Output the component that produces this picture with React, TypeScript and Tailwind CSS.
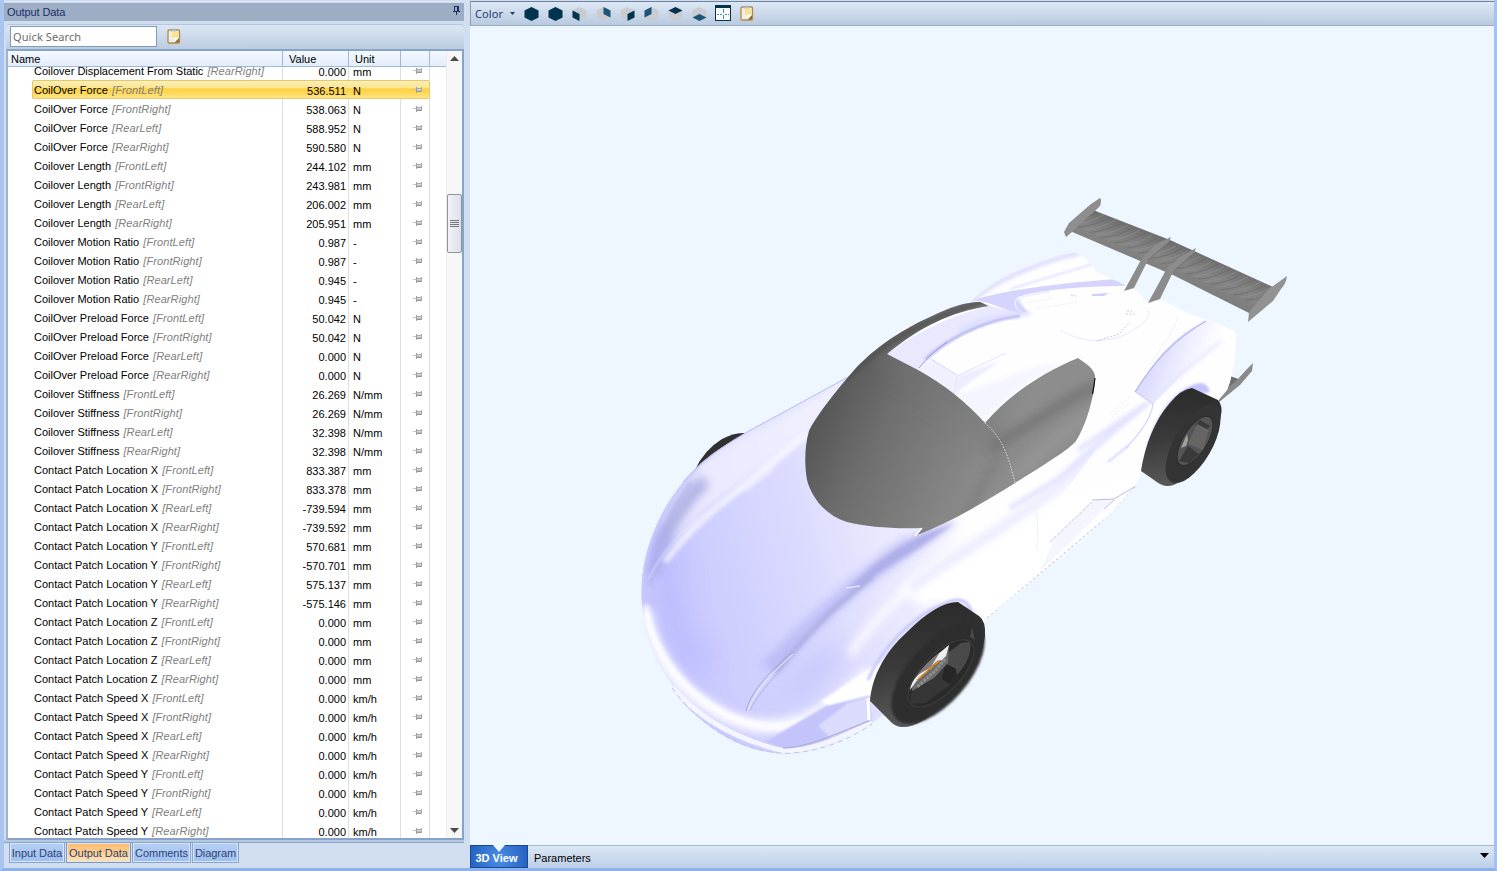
import React from "react";

type Row = [name: string, corner: string, value: string, unit: string];

const corners = ["FrontLeft", "FrontRight", "RearLeft", "RearRight"];
const group = (name: string, unit: string, values: string[]): Row[] =>
  values.map((v, i) => [name, corners[i], v, unit]);

const rows: Row[] = [
  ["Coilover Displacement From Static", "RearRight", "0.000", "mm"],
  ...group("CoilOver Force", "N", ["536.511", "538.063", "588.952", "590.580"]),
  ...group("Coilover Length", "mm", ["244.102", "243.981", "206.002", "205.951"]),
  ...group("Coilover Motion Ratio", "-", ["0.987", "0.987", "0.945", "0.945"]),
  ...group("CoilOver Preload Force", "N", ["50.042", "50.042", "0.000", "0.000"]),
  ...group("Coilover Stiffness", "N/mm", ["26.269", "26.269", "32.398", "32.398"]),
  ...group("Contact Patch Location X", "mm", ["833.387", "833.378", "-739.594", "-739.592"]),
  ...group("Contact Patch Location Y", "mm", ["570.681", "-570.701", "575.137", "-575.146"]),
  ...group("Contact Patch Location Z", "mm", ["0.000", "0.000", "0.000", "0.000"]),
  ...group("Contact Patch Speed X", "km/h", ["0.000", "0.000", "0.000", "0.000"]),
  ...group("Contact Patch Speed Y", "km/h", ["0.000", "0.000", "0.000", "0.000"]),
];

function RowPin() {
  return (
    <svg className="h-[6px] w-[10px]" viewBox="0 0 10 6" shapeRendering="crispEdges">
      <path d="M0 2h3v1H0z" fill="#c2c2c2" />
      <path d="M3 0h1v6H3z" fill="#a0a0a0" />
      <path d="M4 1h4v1H4zM8 0h1v5H8z" fill="#a9a9a9" />
      <path d="M4 2h4v1H4z" fill="#dadada" />
      <path d="M4 3h4v1H4z" fill="#bdbdbd" />
      <path d="M4 4h4v1H4z" fill="#969696" />
    </svg>
  );
}

function TitlePin() {
  return (
    <svg className="h-[9px] w-[7px]" viewBox="0 0 7 9" shapeRendering="crispEdges">
      <path d="M1 0h5v5h1v1H4v3H3V6H0V5h1zM2 1v4h2V1z" fill="#1f2f66" fillRule="evenodd" />
    </svg>
  );
}

function Clipboard() {
  return (
    <svg className="h-[16px] w-[14px]" viewBox="0 0 14 16">
      <rect x="1" y="2" width="11.500" height="13" rx="1" fill="#f0eee8" stroke="#b48a48" strokeWidth="1.300" />
      <path d="M5 4h6v5.500H5z" fill="#fbe48a" />
      <path d="M7.500 14.500 12 10v4.500z" fill="#8f6c34" />
      <path d="M7.500 14V10h4z" fill="#fff" />
      <path d="M3.500 3.600V2H5.500V.6h2V2h2v1.600z" fill="#b4bac2" />
    </svg>
  );
}

type Face = "all" | "left" | "backRight" | "right" | "backLeft" | "top" | "bottom";
const facePaths: Record<Face, string> = {
  all: "M7.5 0 14.5 3.5V10.5L7.5 14 .5 10.5V3.5z",
  left: "M.5 3.5 7.5 7V14L.5 10.5z",
  backRight: "M7.5 0 14.5 3.5V10.5L7.5 7z",
  right: "M7.5 7 14.5 3.5V10.5L7.5 14z",
  backLeft: "M7.5 0 .5 3.5V10.5L7.5 7z",
  top: "M7.5 0 14.5 3.5 7.5 7 .5 3.5z",
  bottom: "M7.5 7 14.5 10.5 7.5 14 .5 10.5z",
};

function Cube({ face }: { face: Face }) {
  const behind = face === "backRight" || face === "backLeft" || face === "bottom";
  return (
    <svg className="h-[14px] w-[15px]" viewBox="0 0 15 14">
      <path d={facePaths.all} fill="#c8cbd0" />
      <path d={facePaths[face]} fill={behind ? "#1b5578" : "#00344f"} />
    </svg>
  );
}

function FitIcon() {
  return (
    <svg className="h-[16px] w-[16px]" viewBox="0 0 16 16" shapeRendering="crispEdges">
      <path d="M0 0h16v16H0z" fill="#00344f" />
      <path d="M1 3h14v12H1z" fill="#fff" />
      <path d="M8 4h1v4H8zM8 10h1v4H8zM2 9h2v1H2zM5 9h2v1H5zM10 9h2v1h-2zM13 9h1v1h-1z" fill="#2a8fc4" />
    </svg>
  );
}

const bodyPath =
  "M970 302C985 288 1003 275 1030 265C1045 259 1060 254 1070 252.500C1077 252 1082 256 1094 266L1095 271L1136 290L1148 303L1162 300L1190 314L1208 320L1232 330Q1237 333 1236 342C1236 355 1233 375 1227 390L1215 404L1142 468L1136 486L1118 506L1082 541L1040 575L1000 607L985 622L960 660L872 723C850 737 825 748 803 752C775 757 745 750 718 732C700 720 683 705 676 694L671 682C655 662 644 632 642 605C640 575 645 550 658 522C668 500 682 482 698 466C715 450 732 441 760 425L850 376L900 330z";
const glassPath =
  "M887 354L918 370C945 385 966 402 985 423C1010 394 1042 373 1078 358L1085 363Q1094 369 1095 376C1095 395 1086 425 1076 441C1070 449 1042 466 1015 483C985 502 947 524 917 535L922 528C892 529 868 527 847 522C825 515 812 498 807 480C804 462 805 445 809 431C815 418 835 392 850 375C868 353 898 331 930 317C950 307 966 302 980 302L989 306C950 312 920 327 887 354z";

function CarModel() {
  return (
    <svg className="block h-[819px] w-[1024px]" viewBox="470 26 1024 819">
      <defs>
        <linearGradient id="body" gradientUnits="userSpaceOnUse" x1="665" y1="580" x2="960" y2="500">
          <stop offset="0" stopColor="#c8c8ff" />
          <stop offset="0.45" stopColor="#dadaff" />
          <stop offset="0.85" stopColor="#f0f0ff" />
          <stop offset="1" stopColor="#fefeff" />
        </linearGradient>
        <linearGradient id="glass" gradientUnits="userSpaceOnUse" x1="806" y1="430" x2="975" y2="510">
          <stop offset="0" stopColor="#555" />
          <stop offset="0.35" stopColor="#6e6e6e" />
          <stop offset="1" stopColor="#8d8d8d" />
        </linearGradient>
        <linearGradient id="wing" gradientUnits="userSpaceOnUse" x1="1170" y1="240" x2="1157" y2="272">
          <stop offset="0" stopColor="#6d6d6d" />
          <stop offset="0.55" stopColor="#858585" />
          <stop offset="1" stopColor="#7d7d7d" />
        </linearGradient>
        <linearGradient id="tread" x1="0.4" y1="0" x2="0.5" y2="1">
          <stop offset="0" stopColor="#2a2a2a" />
          <stop offset="0.5" stopColor="#3a3a3a" />
          <stop offset="1" stopColor="#5a5a5a" />
        </linearGradient>
        <linearGradient id="fender" gradientUnits="userSpaceOnUse" x1="1155" y1="360" x2="1205" y2="380">
          <stop offset="0" stopColor="#dcdcff" />
          <stop offset="0.6" stopColor="#f3f3ff" />
          <stop offset="1" stopColor="#fff" />
        </linearGradient>
        <filter id="b1" x="-30%" y="-30%" width="160%" height="160%"><feGaussianBlur stdDeviation="1" /></filter>
        <filter id="b2" x="-30%" y="-30%" width="160%" height="160%"><feGaussianBlur stdDeviation="2" /></filter>
        <filter id="b5" x="-50%" y="-50%" width="200%" height="200%"><feGaussianBlur stdDeviation="5" /></filter>
        <filter id="b12" x="-100%" y="-100%" width="300%" height="300%"><feGaussianBlur stdDeviation="12" /></filter>
        <clipPath id="bodyClip"><path d={bodyPath} /></clipPath>
        <clipPath id="glassClip"><path d={glassPath} /></clipPath>
        <clipPath id="wingClip"><path d="M1093 210L1170 240L1273 287L1249 313L1173 275L1070 231z" /></clipPath>
      </defs>

      {/* far front tyre */}
      <path d="M695 470Q704 450 722 439Q735 432 745 433L725 449z" fill="#303030" />

      {/* rear diffuser fin */}
      <path d="M1227 375L1238 379L1246 370L1253 363L1252 371L1240 385L1218 403z" fill="#8a8a8a" />
      <path d="M1227 375L1238 379L1221 394z" fill="#707070" />

      <path d={bodyPath} fill="url(#body)" />
      <g clipPath="url(#bodyClip)" fill="none">
        {/* hood and nose shading */}
        <path d="M700 463C740 430 780 420 850 376L808 436L765 468L712 505L672 545L664 520z" fill="#f3f3ff" opacity="0.75" filter="url(#b5)" />
        <path d="M655 575C658 545 676 512 705 480" stroke="#a6a6e0" strokeWidth="13" opacity="0.85" filter="url(#b5)" />
        <path d="M650 585C652 555 665 520 692 482" stroke="#aaaae6" strokeWidth="5" opacity="0.6" filter="url(#b2)" />
        <path d="M672 545C660 590 672 640 705 668" stroke="#b9b9ff" strokeWidth="28" opacity="0.7" filter="url(#b12)" />
        <path d="M665 562C690 528 715 508 750 482L808 433" stroke="#fafaff" strokeWidth="6" opacity="0.75" filter="url(#b2)" />
        <path d="M648 580C660 555 680 532 700 518" stroke="#e6e6ff" strokeWidth="1.500" opacity="0.7" filter="url(#b1)" />
        <path d="M735 492L800 438M745 491L775 467" stroke="#f4f4ff" strokeWidth="3" opacity="0.7" filter="url(#b2)" />
        <path d="M645 610C648 640 665 672 693 696C728 722 758 734 797 722C822 714 845 697 870 672" stroke="#fff" strokeWidth="13" opacity="0.95" filter="url(#b5)" />
        <path d="M646 605C647 630 665 667 694 692C722 716 745 726 780 727C815 722 833 708 855 690" stroke="#fff" strokeWidth="5" opacity="0.9" filter="url(#b2)" />
        <ellipse cx="815" cy="672" rx="42" ry="10" transform="rotate(-44 815 672)" fill="#babafa" opacity="0.6" filter="url(#b12)" />
        <path d="M760 665L800 625L850 580L900 540L960 520L862 589L812 632L775 674z" fill="#b2b2f2" opacity="0.7" filter="url(#b5)" />
        <path d="M775 672C792 653 813 629 835 608L872 577" stroke="#9e9ed8" strokeWidth="4" opacity="0.75" filter="url(#b2)" />
        <path d="M746 711C752 689 771 670 793 652" stroke="#a7a7dc" strokeWidth="1" />
        <path d="M748 710C756 689 774 671 793 654" stroke="#f3f3ff" strokeWidth="1" />
        <path d="M750 710C758 694 773 678 788 662" stroke="#b4b4e4" strokeWidth="1" />
        <path d="M848 588C861 578 875 563 889 554L920 536L955 522C929 544 884 568 860 586z" fill="#aaaae6" opacity="0.85" filter="url(#b2)" />
        <path d="M846 588L860 586" stroke="#f5f5ff" strokeWidth="1" />
        <path d="M900 590C930 560 985 540 1020 520L1100 470L1140 465V600L990 625L965 600L920 605z" fill="#fff" filter="url(#b5)" />
        <path d="M850 655C885 600 945 555 1008 523" stroke="#fff" strokeWidth="7" filter="url(#b5)" />
        <path d="M910 590C945 559 990 540 1058 487L1140 410" stroke="#dedeff" strokeWidth="6" filter="url(#b5)" />
        <path d="M827 705L868 694L872 721L820 745L782 749L765 742z" fill="#c4c4fb" filter="url(#b1)" />
        <path d="M820 702L880 662L890 680L872 695L828 705z" fill="#fff" filter="url(#b1)" />
        <path d="M848 703L868 697L870 720L830 737L818 726z" fill="#e2e2ff" opacity="0.8" filter="url(#b1)" />
        <path d="M868 698L869 720" stroke="#fff" strokeWidth="3" />
        <path d="M672 687C704 724 745 742 785 751C820 750 845 734 872 723" stroke="#f5f5ff" strokeWidth="5" />
        <path d="M783 748C805 748 833 735 869 721" stroke="#a9a9d4" strokeWidth="1" />
        <path d="M642 605C640 575 645 550 658 522C668 500 682 482 698 466" stroke="#cacaff" strokeWidth="3" filter="url(#b1)" />

        {/* rear deck */}
        <path d="M970 303L1035 262L1072 251L1096 270L1150 303L1208 320L1237 332L1230 390L1140 472L1060 500L1095 450L1095 370L1078 357L985 422L887 354L930 327z" fill="#fefeff" />
        <path d="M970 302C1000 276 1050 259 1080 253" stroke="#c9c9fb" strokeWidth="3" filter="url(#b2)" />
        <path d="M1010 289L1093 264" stroke="#dcdcff" strokeWidth="1.500" filter="url(#b1)" />
        <path d="M973 300C1005 290 1060 283 1117 279L1126 286C1075 286 1035 291 1018 297L1028 313L1019 314L988 303z" fill="#d4d4ff" />
        <path d="M1018 297C1010 306 1022 316 1028 312L1018 300Q1018 296 1050 292" stroke="#ededff" strokeWidth="1.500" />
        <path d="M1028 303L1052 298M1036 309L1077 302" stroke="#ececff" strokeWidth="1" strokeDasharray="2 1" />
        <path d="M887 354C920 330 950 316 990 306L1024 314C980 322 942 345 918 370z" fill="#e8e8ff" />
        <path d="M960 330Q995 313 1030 314" stroke="#d8d8ff" strokeWidth="4" opacity="0.8" filter="url(#b2)" />
        <path d="M925 359C944 342 976 322 1020 316" stroke="#aaaaeb" strokeWidth="2" filter="url(#b1)" />
        <path d="M919 368C928 357 936 350 947 342" stroke="#9d9ddd" strokeWidth="1" />
        <path d="M918 370L931 359L957 376L954 394z" fill="#f0f0ff" />
        <path d="M957 376L1000 361L954 394z" fill="#ededff" filter="url(#b1)" />
        <path d="M931 359L957 375" stroke="#d4d4fa" strokeWidth="1" />
        <path d="M957 376L1006 353M957 376L954 395" stroke="#e2e2ff" strokeWidth="1" />
        <path d="M954 395L985 423C1000 403 1030 378 1065 362L1040 366z" fill="#f3f3ff" opacity="0.8" filter="url(#b2)" />
        <path d="M1093 294L1109 293L1104 296H1091z" fill="#ceceff" />
        <path d="M1060 330C1080 341 1100 344 1122 336Q1152 322 1148 311" stroke="#e8e8ff" strokeWidth="1" />
        <path d="M1097 341L1119 334L1130 322M1127 311h5M1126 314h8M1071 295l5 1" stroke="#c6c6f4" strokeWidth="1" strokeDasharray="2 1.500" />
        <path d="M1178 317L1170 335L1150 365" stroke="#f0f0ff" strokeWidth="1" />
        <path d="M1135 392C1153 362 1177 331 1207 320L1234 331L1185 372L1153 404z" fill="url(#fender)" />
        <path d="M1135 392C1153 363 1174 339 1206 321" stroke="#b4b4f4" strokeWidth="1.300" />
        <path d="M1150 400L1222 340" stroke="#e4e4ff" strokeWidth="2.500" filter="url(#b2)" />
        <path d="M1078 450L1149 402L1115 430L1060 478L1010 508" stroke="#e2e2ff" strokeWidth="5" filter="url(#b2)" />
        <path d="M1136 392L1153 404Q1151 422 1126 448" stroke="#d2d2fc" strokeWidth="1.200" />
        <path d="M1110 414l20-17M1112 417l18-15" stroke="#eaeaff" strokeWidth="1" strokeDasharray="2 2" />
        <path d="M1128 446L1108 462" stroke="#d4d4ff" strokeWidth="2" filter="url(#b1)" />
        <path d="M1146 450C1152 425 1168 396 1190 386Q1206 378 1210 392L1194 395z" fill="#c4c4fb" filter="url(#b1)" />
        <path d="M1055 538L1095 500L1114 499L1085 528L1041 570z" fill="#f5f5ff" />
        <path d="M1050 542L1092 502" stroke="#dadaf8" strokeWidth="1.300" strokeDasharray="4 1" />
        <path d="M1135 487L1112 513L1041 573L985 620" stroke="#d0d0f6" strokeWidth="1.300" strokeDasharray="3 2" />
        <path d="M1092 500L1114 499L1136 486M1114 500L1104 509" stroke="#bcbce2" strokeWidth="1" />
        <path d="M1035 504Q1040 530 1036 550" stroke="#f0f0ff" strokeWidth="1" />
        <path d="M868 680C880 651 911 616 946 603Q966 594 972 613L960 606" stroke="#c8c8fa" strokeWidth="3" filter="url(#b1)" />
      </g>
      <path d="M672 688C704 731 744 751 785 753.500C822 752 850 739 872 724" fill="none" stroke="#c3c4e2" strokeWidth="1" strokeDasharray="5 4" />
      <path d="M850 376L760 425C725 443 701 462 683 482" fill="none" stroke="#b8b8f6" strokeWidth="1" />

      {/* glasshouse */}
      <path d={glassPath} fill="url(#glass)" />
      <g clipPath="url(#glassClip)" fill="none">
        <path d="M880 350C930 375 970 410 1000 450" stroke="#767676" strokeWidth="16" opacity="0.55" filter="url(#b12)" />
        <path d="M990 448L1040 418L1078 395L1110 380" stroke="#6e6e6e" strokeWidth="10" opacity="0.7" filter="url(#b5)" />
        <path d="M960 525L1000 455" stroke="#737373" strokeWidth="7" opacity="0.55" filter="url(#b5)" />
        <path d="M1015 478Q1055 435 1095 415" stroke="#959595" strokeWidth="16" opacity="0.8" filter="url(#b5)" />
        <path d="M845 380C878 346 925 318 985 301" stroke="#505050" strokeWidth="4" filter="url(#b2)" />
      </g>
      <path d="M985 423C1003 438 1009 458 1015 483" fill="none" stroke="#ddd" strokeWidth="1" strokeDasharray="1.500 1.500" />
      <path d="M1095 378Q1094 387 1092.500 394" fill="none" stroke="#111" strokeWidth="1.200" />
      <path d="M922 528L915 536" stroke="#fff" strokeWidth="1.500" />

      {/* rear wing */}
      <path d="M1093 210L1170 240L1273 287L1249 313L1173 275L1070 231z" fill="url(#wing)" />
      <g clipPath="url(#wingClip)" fill="none" strokeWidth="1">
        {Array.from({ length: 34 }, (_, i) => (
          <path key={i} transform={`translate(${i * 6} ${i * 2.6})`} d="M1066 222Q1082 221 1098 212" stroke={i % 2 ? "#959595" : "#646464"} opacity="0.55" />
        ))}
      </g>
      <path d="M1100 198Q1102 200 1100 206L1095 211L1080 224L1072 232L1066 237L1064 232L1069 223L1091 204z" fill="#8e8e8e" />
      <path d="M1287 276Q1286 284 1281 289L1273 301L1248 322L1249 312L1269 289z" fill="#929292" />
      <path d="M1171 237L1169 242L1148 260L1134 288L1124 291L1142 258L1155 245z" fill="#8c8c8c" />
      <path d="M1196 248L1194 253L1173 272L1160 299L1148 303L1166 270L1180 257z" fill="#8c8c8c" />
      <path d="M1169 242L1148 260M1194 253L1173 272" stroke="#727272" strokeWidth="1" />

      {/* rear wheel */}
      <path d="M1192 388L1218 400Q1223 406 1221 415C1219 433 1206 452 1195 465C1185 479 1175 487 1166 486Q1160 485 1154 480L1141 471C1145 445 1155 420 1169 404Q1181 389 1192 388z" fill="url(#tread)" />
      <ellipse cx="1193" cy="444" rx="44" ry="19" transform="rotate(-60 1193 444)" fill="#343434" />
      <ellipse cx="1195" cy="441" rx="28" ry="12" transform="rotate(-58 1195 441)" fill="#555" stroke="#2c2c2c" />
      <path d="M1200 420L1210 426L1207 430L1195 425zM1188 446L1199 454L1190 463L1179 461z" fill="#3a3a3a" />
      <path d="M1197 424L1209 430L1203 450L1188 444z" fill="#656565" />
      <path d="M1187 434L1181 448L1186 446L1188 440z" fill="#a5a396" />

      {/* front wheel */}
      <path d="M958 602L979 616Q986 621 985 636C982 660 965 685 945 703C927 720 914 728 901 727Q894 726 889 720L870 701C872 678 883 654 907 632C926 613 943 602 958 602z" fill="url(#tread)" />
      <ellipse cx="938" cy="673" rx="62" ry="30" transform="rotate(-49 938 673)" fill="#2e2e2e" filter="url(#b1)" />
      <ellipse cx="941" cy="673.500" rx="43" ry="19" transform="rotate(-46 941 673.500)" fill="#2a2a2a" stroke="#3d3d3d" strokeWidth="1" />
      <path d="M949 652L961 643L970 642Q973 657 957 675L956 669L945 663z" fill="#4a4a4a" />
      <path d="M944 664L956 669L950 685L925 703L910 704L912 690L930 681z" fill="#363636" />
      <path d="M945 664L956 669L950 684L942 679z" fill="#262626" />
      <path d="M949 645L948 663L934 678L912 691Q911 677 930 661z" fill="#6c6c6c" />
      <path d="M949 645L946 656L942 660L937 661L918 679L910 690Q912 676 928 669L937 655z" fill="#eee" />
      <path d="M940 652Q926 662 919 674L931 667z" fill="#7b7b7b" />
      <path d="M939 661L917 680" stroke="#e78b19" strokeWidth="1.700" strokeDasharray="6 1" />
      <path d="M945 659L935 671L917 687" fill="none" stroke="#8f8f8f" strokeWidth="3" strokeDasharray="3 1" />
      <path d="M972 627L970 637L975 640z" fill="#484848" />
    </svg>
  );
}

function OutputPanel() {
  return (
    <section className="flex w-[460px] flex-col">
      <div className="flex h-[18px] shrink-0 items-center justify-between bg-[#9dadc4] pl-[3px] pr-[4px] text-[#1c2f6b]">
        <span className="tracking-[-0.1px]">Output Data</span>
        <div className="-mt-[3px]"><TitlePin /></div>
      </div>
      <div className="mt-[3px] ml-[2px] flex h-[25px] w-[458px] shrink-0 items-center rounded-t-sm border-t border-[#b4c6df] bg-linear-to-b from-[#dce7f4] to-[#bccde0] pl-[4px]">
        <div className="-mt-[2px] h-[21px] w-[147px] border border-[#7f9db9] bg-white pl-[2px] font-['Noto_Sans',sans-serif] text-[11px] leading-[20px] tracking-[0.1px] text-[#6b6b6b]">
          Quick Search
        </div>
        <div className="-mt-[3px] ml-[10px]"><Clipboard /></div>
      </div>
      <div className="ml-[2px] flex h-[791px] w-[458px] shrink-0 border-2 border-t-[#87a3c7] border-r-[#87a3c7] border-b-[#87a3c7] border-l-[#9db4d3] bg-white">
        <div className="flex w-[438px] flex-col">
          <div className="flex h-[16px] shrink-0 border-b border-[#9eb9da] bg-linear-to-b from-[#f4f9ff] to-[#e3edfa] leading-[16px]">
            <div className="w-[275px] border-r border-[#9eb9da] pl-[3px]">Name</div>
            <div className="w-[66px] border-r border-[#9eb9da] pl-[6px]">Value</div>
            <div className="w-[52px] border-r border-[#9eb9da] pl-[6px]">Unit</div>
            <div className="w-[29px] border-r border-[#9eb9da]" />
          </div>
          <div className="h-[771px] overflow-hidden">
            <div className="-mt-[6px] flex flex-col">
              {rows.map(([name, corner, value, unit], i) => {
                const selected = i === 1;
                const cell = selected ? "border-transparent" : "border-[#dfdfdf]";
                return (
                  <div key={i} className="flex h-[19px]">
                    <div className="w-[24px] shrink-0" />
                    <div
                      className={
                        selected
                          ? "flex w-[398px] rounded-xs bg-[linear-gradient(#fcf0bd,#fbe590_42%,#ffd03c_46%,#ffe07a_88%,#fff0a8)] leading-[20px] shadow-[inset_0_0_0_1px_#e4c968]"
                          : "flex w-[398px] leading-[20px]"
                      }
                    >
                      <div className={`w-[251px] border-r pl-[2px] whitespace-nowrap ${cell}`}>
                        {name} <i className="ml-px tracking-[0.1px] text-[#808080]">[{corner}]</i>
                      </div>
                      <div className={`w-[66px] border-r pt-px pr-[2px] text-right ${cell}`}>{value}</div>
                      <div className={`w-[52px] border-r pt-px pl-[4px] ${cell}`}>{unit}</div>
                      <div className={`flex w-[29px] items-center border-r pl-[12px] ${cell}`}><RowPin /></div>
                    </div>
                  </div>
                );
              })}
            </div>
          </div>
        </div>
        <div className="flex w-[16px] flex-col items-center border-l border-[#ececec] bg-[#f7f7f7]">
          <svg className="mt-[5px] h-[5px] w-[9px]" viewBox="0 0 9 5"><path d="M0 5 4.500 0 9 5z" fill="#4a4a4a" /></svg>
          <div className="mt-[133px] flex h-[59px] w-[15px] shrink-0 flex-col items-center justify-center gap-[1px] rounded-xs border border-[#8e939d] bg-linear-to-r from-[#f2f3f8] to-[#dcdfe8]">
            <div className="h-px w-[9px] bg-[#777]" />
            <div className="h-px w-[9px] bg-[#777]" />
            <div className="h-px w-[9px] bg-[#777]" />
            <div className="h-px w-[9px] bg-[#777]" />
          </div>
          <svg className="mt-auto mb-[5px] h-[5px] w-[9px]" viewBox="0 0 9 5"><path d="M0 0h9L4.500 5z" fill="#4a4a4a" /></svg>
        </div>
      </div>
      <div className="h-[3px] shrink-0 border-b border-[#8ba5c8] bg-[#b7c9e1]" />
      <div className="flex h-[20px] shrink-0 gap-px pl-[5px] text-[#2d4470]">
        {[
          ["Input Data", "w-[56px]"],
          ["Output Data", "w-[65px]"],
          ["Comments", "w-[59px]"],
          ["Diagram", "w-[47px]"],
        ].map(([label, width]) => (
          <div
            key={label}
            className={`${width} border border-t-0 text-center leading-[20px] tracking-[-0.05px] whitespace-nowrap shadow-[inset_0_0_0_1px_#d9e6fa] ${
              label === "Output Data"
                ? "border-[#8399b8] bg-linear-to-b from-[#fdb968] to-[#ffe2b8]"
                : "border-[#8aa5cc] bg-linear-to-b from-[#b4cff5] to-[#9fc0f0]"
            }`}
          >
            {label}
          </div>
        ))}
      </div>
    </section>
  );
}

const cubes: Face[] = ["all", "all", "left", "backRight", "right", "backLeft", "top", "bottom"];

function ViewPanel() {
  return (
    <section className="flex w-[1024px] flex-col">
      <div className="flex h-[25px] shrink-0 items-center border-t border-b border-l border-t-[#6f819d] border-b-[#9baec8] border-l-[#8c9bb0] bg-linear-to-b from-[#dde8f5] to-[#b9cadf] pl-[4px] font-['Noto_Sans',sans-serif] text-[#25406f]">
        <span className="w-[35px] tracking-[0.1px]">Color</span>
        <svg className="mr-[9px] h-[3px] w-[5px]" viewBox="0 0 5 3"><path d="M0 0h5L2.500 3z" fill="#1f3a66" /></svg>
        <div className="flex gap-[9px]">
          {cubes.map((face, i) => <Cube key={i} face={face} />)}
        </div>
        <div className="-mt-px ml-[8px] flex gap-[9px]"><FitIcon /><Clipboard /></div>
      </div>
      <div className="h-[819px] shrink-0 bg-[#eef6ff]"><CarModel /></div>
      <div className="flex h-[23px] shrink-0 border-t border-[#a5b8cc] bg-linear-to-b from-[#dce7f4] to-[#bdcfe7]">
        <div className="-mt-px flex w-[58px] flex-col items-center border border-[#154b9f] bg-[radial-gradient(circle_at_50%_60%,#4c8ee5,#2460bd)] text-white">
          <svg className="-mt-px h-[7px] w-[12px] shrink-0" viewBox="0 0 12 7"><path d="M0 0h12L6 7z" fill="#eef6ff" /></svg>
          <b className="mr-[5px] leading-[13px] whitespace-nowrap">3D View</b>
        </div>
        <span className="pl-[6px] leading-[25px] text-black">Parameters</span>
        <svg className="mt-[7px] mr-[5px] ml-auto h-[5px] w-[9px]" viewBox="0 0 9 5"><path d="M0 0h9L4.500 5z" fill="#000" /></svg>
      </div>
    </section>
  );
}

export default function App() {
  return (
    <main className="flex h-[871px] w-[1497px] overflow-hidden border-r-[3px] border-b-[3px] border-l-4 border-b-[#8db1e8] border-r-[#a5c2ef] border-l-[#a9c5ef] bg-[#d0deef] pt-px font-['Liberation_Sans',Arial,sans-serif] text-[11px] leading-[14px] text-black">
      <div className="flex border-t border-[#d6e4f6]">
        <div className="pt-px"><OutputPanel /></div>
        <div className="-mt-px ml-[6px]"><ViewPanel /></div>
      </div>
    </main>
  );
}
